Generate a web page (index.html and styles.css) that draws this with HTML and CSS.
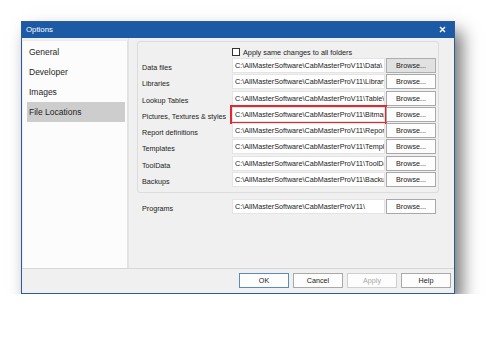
FILE: index.html
```html
<!DOCTYPE html>
<html lang="en">
<head>
    <meta charset="UTF-8">
    <title>Options</title>
    <link rel="stylesheet" href="styles.css">
</head>
<body>
    <div class="dialog">
        <div class="titlebar">
            <span>Options</span>
            <svg class="close" width="7" height="7" viewBox="0 0 7 7">
                <path d="M1 1 L6 6 M6 1 L1 6" stroke="#fff" stroke-width="1.4"/>
            </svg>
        </div>

        <div class="main">
            <ul class="sidebar">
                <li>General</li>
                <li>Developer</li>
                <li>Images</li>
                <li class="active">File Locations</li>
            </ul>

            <div class="content">
                <div class="group">
                    <div class="check-row">
                        <span class="checkbox"></span>
                        <span>Apply same changes to all folders</span>
                    </div>
                    <div class="grid">
                        <span class="label">Data files</span>
                        <div class="field">C:\AllMasterSoftware\CabMasterProV11\Data\</div>
                        <button class="browse focus">Browse...</button>

                        <span class="label">Libraries</span>
                        <div class="field">C:\AllMasterSoftware\CabMasterProV11\Library\</div>
                        <button class="browse">Browse...</button>

                        <span class="label">Lookup Tables</span>
                        <div class="field">C:\AllMasterSoftware\CabMasterProV11\Table\</div>
                        <button class="browse">Browse...</button>

                        <span class="label">Pictures, Textures &amp; styles</span>
                        <div class="field marked">C:\AllMasterSoftware\CabMasterProV11\Bitmap\</div>
                        <button class="browse">Browse...</button>

                        <span class="label">Report definitions</span>
                        <div class="field">C:\AllMasterSoftware\CabMasterProV11\Report\</div>
                        <button class="browse">Browse...</button>

                        <span class="label">Templates</span>
                        <div class="field">C:\AllMasterSoftware\CabMasterProV11\Templates\</div>
                        <button class="browse">Browse...</button>

                        <span class="label">ToolData</span>
                        <div class="field">C:\AllMasterSoftware\CabMasterProV11\ToolData\</div>
                        <button class="browse">Browse...</button>

                        <span class="label">Backups</span>
                        <div class="field">C:\AllMasterSoftware\CabMasterProV11\Backups\</div>
                        <button class="browse">Browse...</button>
                    </div>
                </div>

                <div class="grid programs">
                    <span class="label">Programs</span>
                    <div class="field">C:\AllMasterSoftware\CabMasterProV11\</div>
                    <button class="browse">Browse...</button>
                </div>
            </div>
        </div>

        <div class="footer">
            <button class="btn default">OK</button>
            <button class="btn">Cancel</button>
            <button class="btn" disabled>Apply</button>
            <button class="btn">Help</button>
        </div>
    </div>
</body>
</html>
```

FILE: styles.css
```css
body {
    margin: 0;
    padding: 21px 0 0 21px;
    background: #fff;
    font-family: 'Liberation Sans', Arial, sans-serif;
    color: #222;
}
.dialog {
    width: 432px;
    height: 271px;
    border: 1px solid #2c5c98;
    background: #f0f0f0;
    display: flex;
    flex-direction: column;
    box-shadow: 7px 10px 16px rgba(0, 0, 0, 0.55);
}
.titlebar {
    height: 16px;
    flex: none;
    background: #1c5aa6;
    color: #fff;
    font-size: 7.8px;
    display: flex;
    align-items: center;
    justify-content: space-between;
    padding: 0 8px 1px 4px;
    box-sizing: border-box;
}
.close {
    display: block;
}
.main {
    height: 231px;
    flex: none;
    display: flex;
    border-bottom: 1px solid #d6d6d6;
    box-sizing: border-box;
}
.sidebar {
    flex: none;
    list-style: none;
    margin: 2px 0 0 1px;
    padding: 1px 0 0 0;
    width: 104px;
    background: #fcfcfc;
    border-right: 1px solid #e2e2e2;
    border-top: 1px solid #ececec;
}
.sidebar li {
    height: 20px;
    line-height: 20px;
    margin: 0 2px 0 4px;
    padding-left: 2px;
    font-size: 8.5px;
    color: #1e1e1e;
}
.sidebar li.active {
    background: #cdcdcd;
}
.content {
    flex: 1;
    min-width: 0;
    border-left: 1px solid #e4e4e4;
    padding: 3px 15px 0 8px;
}
.group {
    border: 1px solid #dcdcdc;
    border-radius: 3px;
    padding: 5px 3px 5px 4px;
}
.check-row {
    display: flex;
    align-items: center;
    height: 10px;
    margin: 0 0 1px 89px;
    font-size: 7.3px;
}
.checkbox {
    width: 6px;
    height: 6px;
    border: 1px solid #333;
    background: #fff;
    margin: 0 3px 0 1px;
}
.grid {
    display: grid;
    grid-template-columns: 89px 153px 50px;
    grid-auto-rows: 15px;
    column-gap: 1px;
    row-gap: 1.3px;
}
.programs {
    margin-top: 6px;
    padding: 0 3px 0 5px;
}
.label {
    font-size: 7.2px;
    line-height: 10px;
    padding-top: 5px;
    white-space: nowrap;
}
.field {
    background: #fff;
    border: 1px solid #e4e4e4;
    font-size: 7.2px;
    line-height: 13px;
    padding: 0 2px;
    white-space: nowrap;
    overflow: hidden;
}
.field.marked {
    outline: 2px solid #e02a2f;
}
.browse, .btn {
    font-family: 'Liberation Sans', Arial, sans-serif;
    font-size: 7.2px;
    color: #222;
    background: #fdfdfd;
    border: 1px solid #a9a9a9;
    padding: 0;
    margin: 0;
    height: 15px;
}
.browse.focus {
    background: #e1e1e1;
    border-color: #adadad;
}
.footer {
    flex: 1;
    display: flex;
    justify-content: flex-end;
    gap: 4px;
    padding: 4px 3px 0 0;
}
.btn {
    width: 50px;
}
.btn.default {
    border-color: #5a8ac4;
}
.btn:disabled {
    color: #a8a8a8;
    border-color: #cfcfcf;
}
```
